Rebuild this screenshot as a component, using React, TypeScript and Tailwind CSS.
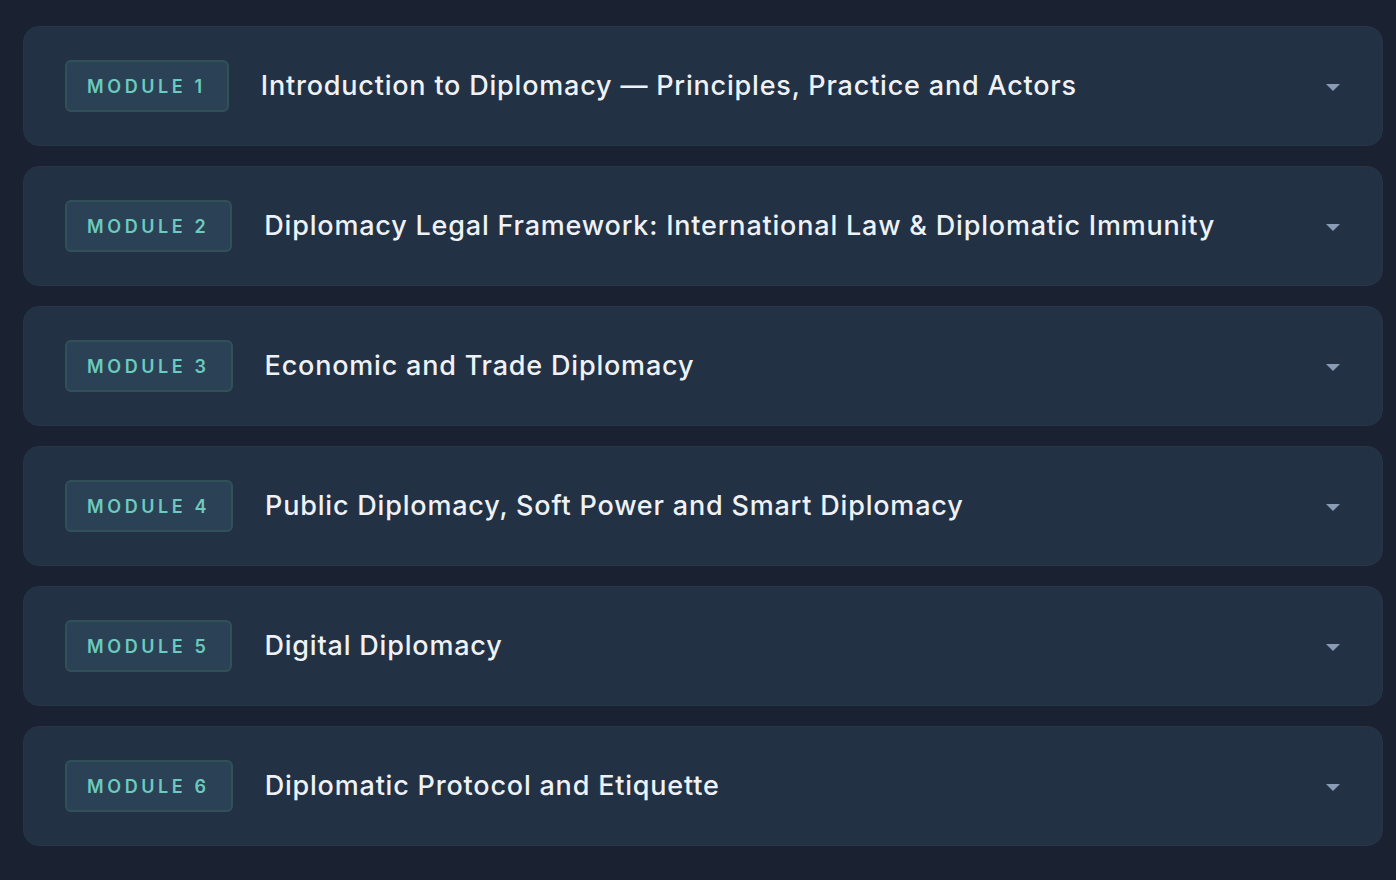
import React from "react";

const modules = [
  "Introduction to Diplomacy — Principles, Practice and Actors",
  "Diplomacy Legal Framework: International Law & Diplomatic Immunity",
  "Economic and Trade Diplomacy",
  "Public Diplomacy, Soft Power and Smart Diplomacy",
  "Digital Diplomacy",
  "Diplomatic Protocol and Etiquette",
];

export default function App() {
  return (
    <div
      className="min-h-[880px] w-full bg-[#1a2130] pl-[23px] pr-[13px] pt-[26px] pb-[34px]"
      style={{ fontFamily: "Inter, 'Noto Sans', sans-serif" }}
    >
      <div className="flex flex-col gap-[20px]">
        {modules.map((title, i) => (
          <div
            key={i}
            className="flex h-[120px] items-center rounded-[16px] border border-[#26354a] bg-[#233144] pl-[41px] pr-[41px]"
          >
            <div className="flex h-[52px] items-center rounded-[6px] border-2 border-[#315159] bg-[#2b4155] pl-[20px] pr-[21px] text-[18px] font-semibold tracking-[0.2em] text-[#6ccabe]">
              MODULE {i + 1}
            </div>
            <div className="ml-[32px] flex-1 text-[27px] font-medium tracking-[0.8px] text-[#eef2f7]">
              {title}
            </div>
            <svg width="14" height="8" viewBox="0 0 14 8" className="mr-[1px] mt-[3px]">
              <path d="M0 0 L14 0 L7 7 Z" fill="#8a9bb4" />
            </svg>
          </div>
        ))}
      </div>
    </div>
  );
}
